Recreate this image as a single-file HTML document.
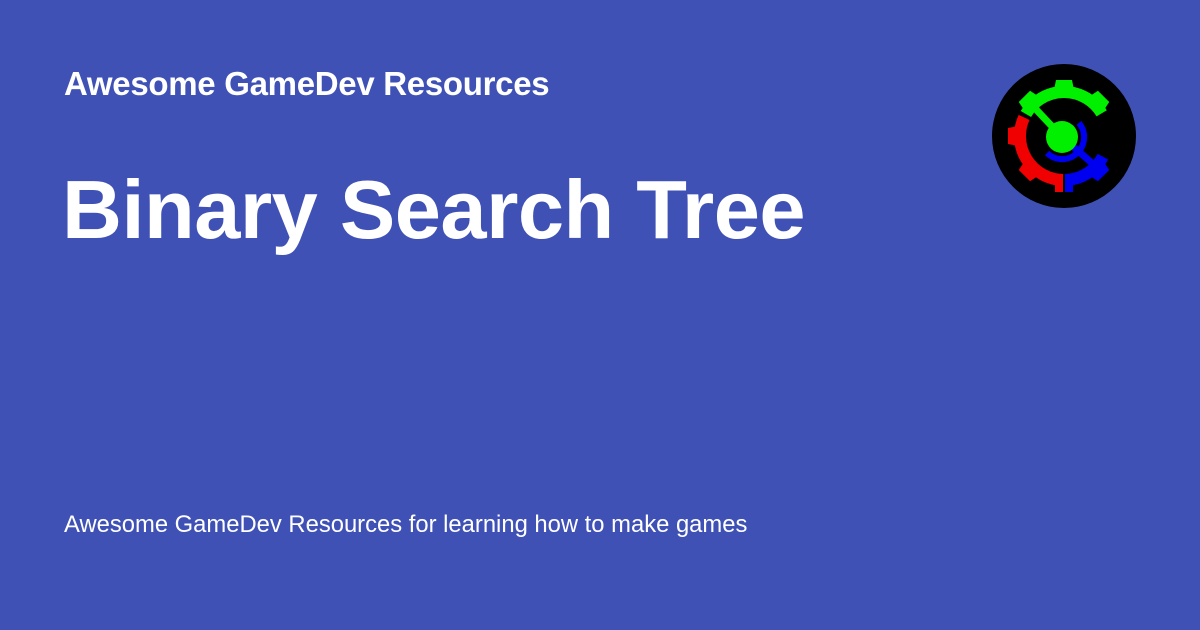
<!DOCTYPE html>
<html><head><style>
html,body{margin:0;padding:0}
body{width:1200px;height:630px;background:#3f51b5;position:relative;overflow:hidden;font-family:"Liberation Sans",sans-serif;color:#fff}
.t1{position:absolute;left:64px;top:65px;font-size:33px;font-weight:bold;letter-spacing:-0.3px}
.t2{position:absolute;left:62px;top:162px;font-size:83px;font-weight:bold;letter-spacing:-0.5px}
.t3{position:absolute;left:64px;top:511px;font-size:23.8px}
svg{position:absolute;left:0;top:0}
</style></head><body>
<div class="t1">Awesome GameDev Resources</div>
<div class="t2">Binary Search Tree</div>
<div class="t3">Awesome GameDev Resources for learning how to make games</div>
<svg width="1200" height="630" viewBox="0 0 1200 630">
<circle cx="1064" cy="136" r="72" fill="#000"/>
<g transform="translate(1064,136)" fill="none">
<path d="M-38.1,-22 A44,44 0 0 1 37.7,-22.7" stroke="#00f000" stroke-width="12"/>
<path d="M-39.9,-18.6 A44,44 0 0 0 -1,44" stroke="#f00000" stroke-width="12"/>
<path d="M1,44 A44,44 0 0 0 38.9,20.7" stroke="#0000f0" stroke-width="12"/>
<g fill="#00f000">
<path d="M-10,-46 L-8,-56 L8,-56 L10,-46Z"/>
<path d="M-10,-46 L-8,-56 L8,-56 L10,-46Z" transform="rotate(45)"/>
<path d="M-10,-46 L-8,-56 L8,-56 L10,-46Z" transform="rotate(-45)"/>
</g>
<g fill="#f00000">
<path d="M-10,-46 L-8,-56 L8,-56 L10,-46Z" transform="rotate(-90)"/>
<path d="M-10,-46 L-8,-56 L8,-56 L10,-46Z" transform="rotate(-135)"/>
<rect x="-9" y="44" width="8" height="12"/>
</g>
<g fill="#0000f0">
<rect x="1" y="44" width="8" height="12"/>
<path d="M-10,-46 L-8,-56 L8,-56 L10,-46Z" transform="rotate(135)"/>
</g>
<path d="M14.9,-13.1 A22,22 0 0 1 -17,17.1" stroke="#0000f0" stroke-width="6"/>
<line x1="-2" y1="1" x2="36" y2="34" stroke="#0000f0" stroke-width="7"/>
<line x1="-2" y1="1" x2="-34" y2="-33" stroke="#00f000" stroke-width="7"/>
<circle cx="-2" cy="1" r="16" fill="#00f000"/>
</g>
</svg>
</body></html>
